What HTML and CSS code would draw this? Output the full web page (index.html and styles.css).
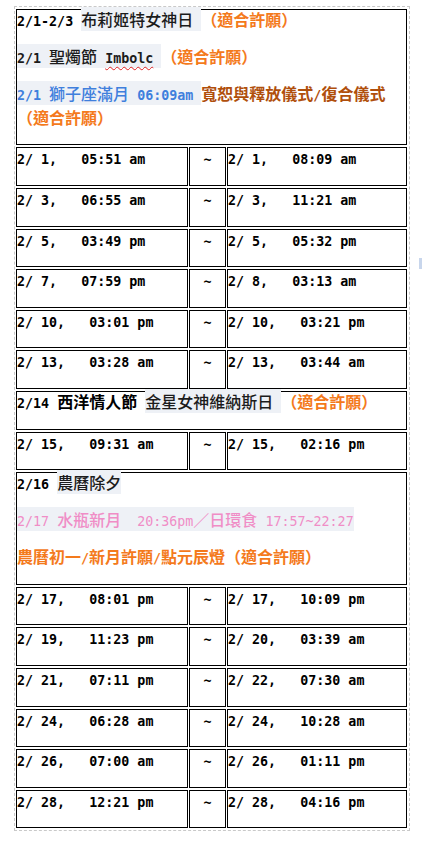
FILE: index.html
```html
<!DOCTYPE html>
<html lang="zh-Hant">
<head>
<meta charset="utf-8">
<title>二月許願時間表</title>
<link rel="stylesheet" href="styles.css">
</head>
<body>
<div class="frame">
<table class="cal">
<colgroup><col class="c1"><col class="c2"><col class="c3"></colgroup>
<tr><td colspan="3" class="note">
<p>2/1-2/3 <span class="hl">布莉姬特女神日<span class="m"> </span></span><span class="or">（適合許願）</span></p>
<p><span class="hl"><span class="m">2/1 </span>聖燭節<span class="m"> <span class="typo">Imbolc</span> </span></span><span class="or">（適合許願）</span></p>
<p><span class="hl bl"><span class="m">2/1 </span>獅子座滿月<span class="m"> 06:09am </span></span><span class="br">寬恕與釋放儀式<span class="m">/</span>復合儀式</span><br><span class="or">（適合許願）</span></p>
</td></tr>
<tr><td class="t">2/ 1,   05:51 am</td><td class="t tl">~</td><td class="t">2/ 1,   08:09 am</td></tr>
<tr><td class="t">2/ 3,   06:55 am</td><td class="t tl">~</td><td class="t">2/ 3,   11:21 am</td></tr>
<tr><td class="t">2/ 5,   03:49 pm</td><td class="t tl">~</td><td class="t">2/ 5,   05:32 pm</td></tr>
<tr><td class="t">2/ 7,   07:59 pm</td><td class="t tl">~</td><td class="t">2/ 8,   03:13 am</td></tr>
<tr><td class="t">2/ 10,   03:01 pm</td><td class="t tl">~</td><td class="t">2/ 10,   03:21 pm</td></tr>
<tr><td class="t">2/ 13,   03:28 am</td><td class="t tl">~</td><td class="t">2/ 13,   03:44 am</td></tr>
<tr><td colspan="3" class="note">
<p>2/14 <span class="bd">西洋情人節</span> <span class="hl">金星女神維納斯日<span class="m"> </span></span><span class="or">（適合許願）</span></p>
</td></tr>
<tr><td class="t">2/ 15,   09:31 am</td><td class="t tl">~</td><td class="t">2/ 15,   02:16 pm</td></tr>
<tr><td colspan="3" class="note">
<p>2/16 <span class="hl">農曆除夕</span></p>
<p><span class="hl pk"><span class="m">2/17 </span>水瓶新月<span class="m">  20:36pm</span>／日環食<span class="m"> 17:57~22:27</span></span></p>
<p><span class="or bd">農曆初一<span class="m">/</span>新月許願<span class="m">/</span>點元辰燈（適合許願）</span></p>
</td></tr>
<tr><td class="t">2/ 17,   08:01 pm</td><td class="t tl">~</td><td class="t">2/ 17,   10:09 pm</td></tr>
<tr><td class="t">2/ 19,   11:23 pm</td><td class="t tl">~</td><td class="t">2/ 20,   03:39 am</td></tr>
<tr><td class="t">2/ 21,   07:11 pm</td><td class="t tl">~</td><td class="t">2/ 22,   07:30 am</td></tr>
<tr><td class="t">2/ 24,   06:28 am</td><td class="t tl">~</td><td class="t">2/ 24,   10:28 am</td></tr>
<tr><td class="t">2/ 26,   07:00 am</td><td class="t tl">~</td><td class="t">2/ 26,   01:11 pm</td></tr>
<tr><td class="t">2/ 28,   12:21 pm</td><td class="t tl">~</td><td class="t">2/ 28,   04:16 pm</td></tr>
</table>
</div>
<div class="handle"></div>
</body>
</html>
```
FILE: styles.css
```css
html, body {
  margin: 0;
  padding: 0;
  background: #fff;
}
body {
  position: relative;
  font-family: "DejaVu Sans Mono", monospace;
  font-size: 13.33px;
  font-weight: 700;
  color: #000;
}
.frame {
  margin: 6px 0 0 14px;
  width: 394px;
  border: 1px dashed #c9c9c9;
}
.cal {
  width: 393px;
  table-layout: fixed;
  border-collapse: separate;
  border-spacing: 1px 2px;
}
.c1 { width: 172px; }
.c2 { width: 37px; }
.c3 { width: 180px; }
.cal td {
  border: 1px solid #000;
  padding: 0;
  vertical-align: top;
  line-height: 24px;
}
.note p {
  margin: 0 0 12.8px;
  line-height: 24px;
}
.t {
  padding-bottom: 12.6px !important;
  white-space: pre;
}
.tl {
  text-align: center;
}
.hl, .or, .br, .bd {
  font-family: "Noto Sans CJK TC", "Noto Sans CJK SC", sans-serif;
  font-size: 16px;
  line-height: 16px;
}
.m {
  font-family: "DejaVu Sans Mono", monospace;
  font-size: 13.33px;
  line-height: 16px;
  font-weight: 700;
  white-space: pre;
}
.hl {
  background: #eef1f6;
  color: #1c1c1c;
  font-weight: 500;
}
.hl.bl {
  color: #3f7fdd;
}
.hl.pk {
  color: #f08dc6;
}
.hl.pk .m {
  font-weight: 400;
}
.or {
  color: #f47a1c;
  font-weight: 700;
}
.br {
  color: #b04f0c;
  font-weight: 700;
}
.bd {
  font-weight: 700;
}
.typo {
  text-decoration: underline wavy #e02020;
  text-decoration-thickness: 1px;
  text-underline-offset: 3px;
}
.handle {
  position: absolute;
  left: 419px;
  top: 258px;
  width: 3px;
  height: 11px;
  background: #c8d6ec;
}
```
